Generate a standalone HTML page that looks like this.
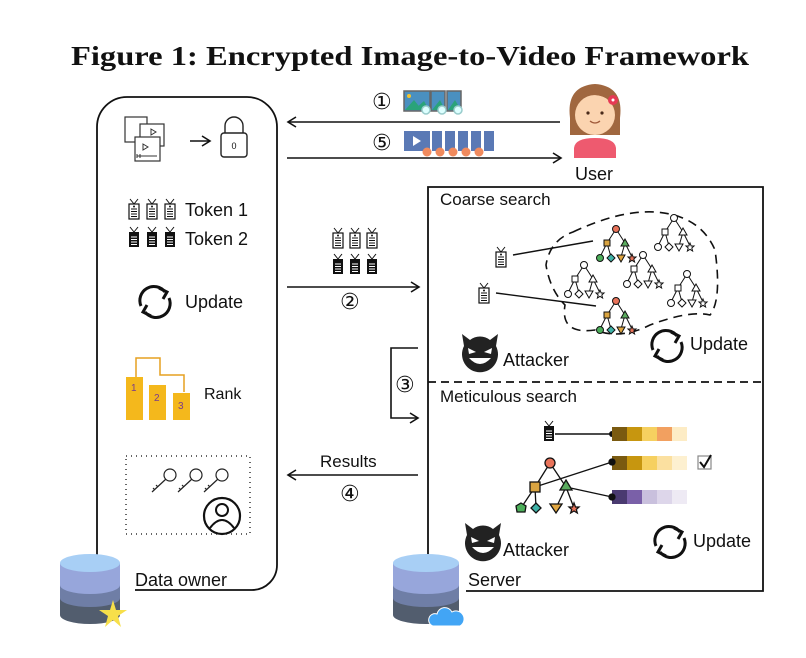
<!DOCTYPE html>
<html><head><meta charset="utf-8"><style>
html,body{margin:0;padding:0;background:#fff;}
svg{display:block;}
text{font-family:"Liberation Sans",sans-serif;fill:#111;}
</style></head><body>
<svg width="806" height="658" viewBox="0 0 806 658" xmlns="http://www.w3.org/2000/svg">
<defs>
<marker id="ah" markerWidth="12" markerHeight="12" refX="10" refY="6" orient="auto" markerUnits="userSpaceOnUse">
<path d="M2,1 L10,6 L2,11" fill="none" stroke="#111" stroke-width="1.6"/>
</marker>
<symbol id="tokW" viewBox="0 0 12 20" overflow="visible">
<path d="M2,0 L6,5 L10,0" stroke="#111" fill="none" stroke-width="1"/>
<rect x="1" y="5" width="10" height="15" fill="#fff" stroke="#111" stroke-width="1.2"/>
<circle cx="6" cy="7.5" r="1" fill="#111"/>
<path d="M3,10h6M3,12.5h6M3,15h6M3,17.5h6" stroke="#111" stroke-width="1"/>
</symbol>
<symbol id="tokB" viewBox="0 0 12 20" overflow="visible">
<path d="M2,0 L6,5 L10,0" stroke="#111" fill="none" stroke-width="1"/>
<rect x="1" y="5" width="10" height="15" fill="#111"/>
<path d="M3,10h6M3,12.5h6M3,15h6M3,17.5h6" stroke="#fff" stroke-width="1"/>
</symbol>
<symbol id="upd" viewBox="-20 -20 40 40" overflow="visible">
<path d="M-14,4 A14,14 0 0 1 10,-10" fill="none" stroke="#111" stroke-width="3"/>
<path d="M4,-14 L12,-10 L8,-3" fill="none" stroke="#111" stroke-width="3"/>
<path d="M14,-4 A14,14 0 0 1 -10,10" fill="none" stroke="#111" stroke-width="3"/>
<path d="M-4,14 L-12,10 L-8,3" fill="none" stroke="#111" stroke-width="3"/>
</symbol>
<symbol id="treeW" viewBox="-22 -4 44 40" overflow="visible">
<g stroke="#111" stroke-width="1" fill="#fff">
<path d="M0,0 L-9,14 M0,0 L9,14 M-9,14 L-16,28 M-9,14 L-5,28 M9,14 L5,28 M9,14 L16,28"/>
<circle cx="0" cy="0" r="3.5"/>
<rect x="-12" y="11" width="6" height="6"/>
<path d="M9,10 L13,17 L5,17Z"/>
<circle cx="-16" cy="29" r="3.5"/>
<path d="M-5,25 L-1,29 L-5,33 L-9,29Z"/>
<path d="M1,26 L9,26 L5,33Z"/>
<path d="M16,25 L17.2,28 L20,28 L17.8,30 L18.6,33 L16,31.3 L13.4,33 L14.2,30 L12,28 L14.8,28Z"/>
</g>
</symbol>
<symbol id="treeC" viewBox="-22 -4 44 40" overflow="visible">
<g stroke="#111" stroke-width="1">
<path d="M0,0 L-9,14 M0,0 L9,14 M-9,14 L-16,28 M-9,14 L-5,28 M9,14 L5,28 M9,14 L16,28" fill="none"/>
<circle cx="0" cy="0" r="3.5" fill="#e8735a"/>
<rect x="-12" y="11" width="6" height="6" fill="#d9a441"/>
<path d="M9,10 L13,17 L5,17Z" fill="#5aab5e"/>
<circle cx="-16" cy="29" r="3.5" fill="#4cae5a"/>
<path d="M-5,25 L-1,29 L-5,33 L-9,29Z" fill="#3fb3a8"/>
<path d="M1,26 L9,26 L5,33Z" fill="#e0a640"/>
<path d="M16,25 L17.2,28 L20,28 L17.8,30 L18.6,33 L16,31.3 L13.4,33 L14.2,30 L12,28 L14.8,28Z" fill="#e8735a"/>
</g>
</symbol>
<symbol id="devil" viewBox="-22 -22 44 44" overflow="visible">
<path d="M-18,-18 L-10,-12 A16,16 0 0 1 10,-12 L18,-18 L16,-6 A18,18 0 1 1 -16,-6 Z" fill="#222"/>
<path d="M-12,-4 L-4,0 L-11,2Z M12,-4 L4,0 L11,2Z" fill="#fff"/>
<path d="M-11,6 Q0,18 11,6 Z" fill="#fff"/>
</symbol>
</defs>

<!-- title -->
<text x="410" y="65" text-anchor="middle" style="font-family:'Liberation Serif',serif;font-weight:bold;font-size:27px" textLength="678" lengthAdjust="spacingAndGlyphs">Figure 1: Encrypted Image-to-Video Framework</text>

<!-- data owner box -->
<path d="M97,555 L97,127 A30,30 0 0 1 127,97 L247,97 A30,30 0 0 1 277,127 L277,565 A25,25 0 0 1 252,590 L135,590" fill="none" stroke="#111" stroke-width="1.8"/>

<!-- server box -->
<path d="M428,555 L428,187 L763,187 L763,591 L466,591" fill="none" stroke="#111" stroke-width="1.8"/>
<line x1="428" y1="382" x2="763" y2="382" stroke="#111" stroke-width="1.8" stroke-dasharray="8,5"/>

<!-- arrows top -->
<line x1="560" y1="122" x2="288" y2="122" stroke="#111" stroke-width="1.6" marker-end="url(#ah)"/>
<line x1="287" y1="158" x2="561" y2="158" stroke="#111" stroke-width="1.6" marker-end="url(#ah)"/>
<text x="372" y="109" font-size="22" style="font-family:'DejaVu Sans',sans-serif">①</text>
<text x="372" y="150" font-size="22" style="font-family:'DejaVu Sans',sans-serif">⑤</text>
<!-- images -->
<g>
<rect x="404" y="91" width="26" height="20" fill="#4a90c0" stroke="#666" stroke-width="1.5"/>
<path d="M405,110 L414,100 L422,110Z M414,110 L424,101 L429,110Z" fill="#2aa37a"/>
<circle cx="409" cy="96" r="2" fill="#f4c430"/>
<rect x="431" y="91" width="14" height="20" fill="#4a90c0" stroke="#666" stroke-width="1.5"/>
<rect x="447" y="91" width="14" height="20" fill="#4a90c0" stroke="#666" stroke-width="1.5"/>
<path d="M432,110 L440,100 L445,110Z M448,110 L455,100 L461,110Z" fill="#2aa37a"/>
<circle cx="426" cy="110" r="4" fill="#dff" stroke="#9cc" stroke-width="1.5"/>
<circle cx="442" cy="110" r="4" fill="#dff" stroke="#9cc" stroke-width="1.5"/>
<circle cx="458" cy="110" r="4" fill="#dff" stroke="#9cc" stroke-width="1.5"/>
</g>
<!-- video strip -->
<g>
<rect x="404" y="131" width="26" height="20" fill="#5a79b5"/>
<path d="M413,136 L421,141 L413,146Z" fill="#fff"/>
<rect x="432" y="131" width="10" height="20" fill="#5a79b5"/>
<rect x="445" y="131" width="10" height="20" fill="#5a79b5"/>
<rect x="458" y="131" width="10" height="20" fill="#5a79b5"/>
<rect x="471" y="131" width="10" height="20" fill="#5a79b5"/>
<rect x="484" y="131" width="10" height="20" fill="#5a79b5"/>
<g fill="#f08a5d">
<circle cx="427" cy="152" r="4.5"/><circle cx="440" cy="152" r="4.5"/><circle cx="453" cy="152" r="4.5"/><circle cx="466" cy="152" r="4.5"/><circle cx="479" cy="152" r="4.5"/>
</g>
</g>

<!-- user -->
<g>
<path d="M570,118 Q566,86 595,84 Q624,86 620,118 L620,135 L570,135Z" fill="#a0673f"/>
<ellipse cx="595" cy="115" rx="20" ry="20" fill="#fbd4b0"/>
<path d="M575,105 Q590,86 615,103 L615,96 Q600,82 577,95Z" fill="#a0673f"/>
<circle cx="588" cy="113" r="1.6" fill="#4a2a1a"/><circle cx="602" cy="113" r="1.6" fill="#4a2a1a"/>
<path d="M590,121 Q595,125 600,121" fill="none" stroke="#a05a3a" stroke-width="1.3"/>
<path d="M574,158 L574,148 Q575,138 595,138 Q615,138 616,148 L616,158Z" fill="#ee5a6f"/>
<circle cx="613" cy="100" r="5" fill="#e63a55"/><circle cx="613" cy="100" r="1.5" fill="#fff"/>
</g>
<text x="575" y="180" font-size="18">User</text>

<!-- left: film icons -->
<g fill="#fff" stroke="#333" stroke-width="1.2">
<rect x="125" y="117" width="22" height="25"/>
<rect x="140" y="124" width="24" height="22"/>
<rect x="135" y="137" width="25" height="24"/>
</g>
<path d="M143,144 L148,147 L143,150Z M151,129 L156,132 L151,135Z" fill="none" stroke="#333"/>
<path d="M137,156 h20 M137,154v4 M140,154v4" stroke="#333" stroke-width="1"/>
<line x1="190" y1="141" x2="210" y2="141" stroke="#111" stroke-width="1.4" marker-end="url(#ah)"/>
<path d="M225,133 L225,126 A9,9 0 0 1 243,126 L243,133" fill="none" stroke="#222" stroke-width="1.4"/>
<rect x="221" y="133" width="26" height="24" rx="3" fill="#fff" stroke="#222" stroke-width="1.4"/>
<text x="234" y="149" font-size="9" text-anchor="middle">0</text>

<!-- tokens -->
<use href="#tokW" x="128" y="199" width="12" height="20"/>
<use href="#tokW" x="146" y="199" width="12" height="20"/>
<use href="#tokW" x="164" y="199" width="12" height="20"/>
<use href="#tokB" x="128" y="227" width="12" height="20"/>
<use href="#tokB" x="146" y="227" width="12" height="20"/>
<use href="#tokB" x="164" y="227" width="12" height="20"/>
<text x="185" y="216" font-size="18">Token 1</text>
<text x="185" y="245" font-size="18">Token 2</text>

<use href="#upd" x="135" y="282" width="40" height="40"/>
<text x="185" y="308" font-size="18">Update</text>

<!-- rank -->
<path d="M136,377 L136,358 L160,358 L160,375 L184,375 L184,392" fill="none" stroke="#e5a020" stroke-width="1.5"/>
<rect x="126" y="377" width="17" height="43" fill="#f4b81c"/>
<rect x="149" y="385" width="17" height="35" fill="#f4b81c"/>
<rect x="173" y="393" width="17" height="27" fill="#f4b81c"/>
<text x="131" y="391" font-size="10" fill="#7a3b8a" style="fill:#7a3b8a">1</text>
<text x="154" y="401" font-size="10" style="fill:#7a3b8a">2</text>
<text x="178" y="409" font-size="10" style="fill:#7a3b8a">3</text>
<text x="204" y="399" font-size="16">Rank</text>

<!-- keys box -->
<rect x="126" y="456" width="124" height="78" fill="none" stroke="#333" stroke-width="1.5" stroke-dasharray="1,4"/>
<g fill="#fff" stroke="#222" stroke-width="1.2">
<circle cx="170" cy="475" r="6"/><circle cx="196" cy="475" r="6"/><circle cx="222" cy="475" r="6"/>
<path d="M166,479 L152,492 M158,487l-2,-2 M155,490l-2,-2 M192,479 L178,492 M184,487l-2,-2 M181,490l-2,-2 M218,479 L204,492 M210,487l-2,-2 M207,490l-2,-2" fill="none"/>
</g>
<circle cx="222" cy="516" r="18" fill="#fff" stroke="#111" stroke-width="2.2"/>
<circle cx="222" cy="510" r="6" fill="none" stroke="#111" stroke-width="2"/>
<path d="M210,528 Q222,512 234,528" fill="none" stroke="#111" stroke-width="2"/>

<!-- db left -->
<g>
<path d="M60,575 L60,615 A30,9 0 0 0 120,615 L120,575Z" fill="#525d6e"/>
<path d="M60,573 L60,598 A30,9 0 0 0 120,598 L120,573Z" fill="#6f7ea6"/>
<path d="M60,563 L60,585 A30,9 0 0 0 120,585 L120,563Z" fill="#97a6db"/>
<ellipse cx="90" cy="563" rx="30" ry="9" fill="#a8cff5"/>
<path d="M113,600 L116,610 L127,610 L118,616 L121,627 L113,620 L105,627 L108,616 L99,610 L110,610Z" fill="#f7df4a"/>
</g>
<text x="135" y="586" font-size="18">Data owner</text>

<!-- db server -->
<g>
<path d="M393,575 L393,615 A33,9 0 0 0 459,615 L459,575Z" fill="#525d6e"/>
<path d="M393,573 L393,598 A33,9 0 0 0 459,598 L459,573Z" fill="#6f7ea6"/>
<path d="M393,563 L393,585 A33,9 0 0 0 459,585 L459,563Z" fill="#97a6db"/>
<ellipse cx="426" cy="563" rx="33" ry="9" fill="#a8cff5"/>
<path d="M433,626 A6,6 0 0 1 437,614 A8,8 0 0 1 452,612 A6,6 0 0 1 460,626Z" fill="#42a5f5" stroke="#fff" stroke-width="1"/>
</g>
<text x="468" y="586" font-size="18">Server</text>

<!-- arrow 2 -->
<use href="#tokW" x="332" y="228" width="12" height="20"/>
<use href="#tokW" x="349" y="228" width="12" height="20"/>
<use href="#tokW" x="366" y="228" width="12" height="20"/>
<use href="#tokB" x="332" y="254" width="12" height="20"/>
<use href="#tokB" x="349" y="254" width="12" height="20"/>
<use href="#tokB" x="366" y="254" width="12" height="20"/>
<line x1="287" y1="287" x2="419" y2="287" stroke="#111" stroke-width="1.6" marker-end="url(#ah)"/>
<text x="340" y="309" font-size="22" style="font-family:'DejaVu Sans',sans-serif">②</text>

<!-- bracket 3 -->
<path d="M418,348 L391,348 L391,418 L418,418" fill="none" stroke="#111" stroke-width="1.6" marker-end="url(#ah)"/>
<text x="395" y="392" font-size="22" style="font-family:'DejaVu Sans',sans-serif">③</text>

<!-- results -->
<text x="320" y="467" font-size="17">Results</text>
<line x1="418" y1="475" x2="288" y2="475" stroke="#111" stroke-width="1.6" marker-end="url(#ah)"/>
<text x="340" y="501" font-size="22" style="font-family:'DejaVu Sans',sans-serif">④</text>

<!-- coarse search -->
<text x="440" y="205" font-size="17">Coarse search</text>
<path d="M573,232 Q620,210 655,212 Q700,215 715,250 Q722,300 710,315 Q690,310 650,325 Q620,340 595,330 Q560,335 565,305 Q550,290 546,265 Q550,240 573,232" fill="none" stroke="#111" stroke-width="1.6" stroke-dasharray="9,6"/>
<use href="#tokW" x="495" y="247" width="12" height="20"/>
<use href="#tokW" x="478" y="283" width="12" height="20"/>
<line x1="513" y1="255" x2="593" y2="241" stroke="#111" stroke-width="1.4"/>
<line x1="496" y1="293" x2="596" y2="306" stroke="#111" stroke-width="1.4"/>
<use href="#treeC" x="594" y="225" width="44" height="40"/>
<use href="#treeW" x="652" y="214" width="44" height="40"/>
<use href="#treeW" x="562" y="261" width="44" height="40"/>
<use href="#treeW" x="621" y="251" width="44" height="40"/>
<use href="#treeW" x="665" y="270" width="44" height="40"/>
<use href="#treeC" x="594" y="297" width="44" height="40"/>
<use href="#devil" x="458" y="330" width="44" height="44"/>
<text x="503" y="366" font-size="18">Attacker</text>
<use href="#upd" x="647" y="326" width="40" height="40"/>
<text x="690" y="350" font-size="18">Update</text>

<!-- meticulous -->
<text x="440" y="402" font-size="17">Meticulous search</text>
<use href="#tokB" x="543" y="421" width="12" height="20"/>
<line x1="555" y1="434" x2="612" y2="434" stroke="#111" stroke-width="1.4"/>
<circle cx="612" cy="434" r="3" fill="#111"/>
<g>
<rect x="612" y="427" width="15" height="14" fill="#7a5a10"/><rect x="627" y="427" width="15" height="14" fill="#c7960f"/><rect x="642" y="427" width="15" height="14" fill="#f6d060"/><rect x="657" y="427" width="15" height="14" fill="#f2a060"/><rect x="672" y="427" width="15" height="14" fill="#fdecc5"/>
<rect x="612" y="456" width="15" height="14" fill="#7a5a10"/><rect x="627" y="456" width="15" height="14" fill="#c7960f"/><rect x="642" y="456" width="15" height="14" fill="#f6d060"/><rect x="657" y="456" width="15" height="14" fill="#fbe0a0"/><rect x="672" y="456" width="15" height="14" fill="#fdf0d0"/>
<rect x="612" y="490" width="15" height="14" fill="#4a3a70"/><rect x="627" y="490" width="15" height="14" fill="#7a60a8"/><rect x="642" y="490" width="15" height="14" fill="#c9c0dd"/><rect x="657" y="490" width="15" height="14" fill="#ddd6ea"/><rect x="672" y="490" width="15" height="14" fill="#eeeaf4"/>
</g>
<rect x="698" y="456" width="13" height="13" fill="#fff" stroke="#888" stroke-width="1.2"/>
<path d="M700,462 L704,467 L711,455" fill="none" stroke="#111" stroke-width="2"/>
<g stroke="#111" stroke-width="1.3">
<path d="M550,463 L535,487 M550,463 L566,487 M535,487 L521,508 M535,487 L536,508 M566,487 L556,508 M566,487 L574,508" fill="none"/>
<line x1="535" y1="487" x2="612" y2="462"/>
<line x1="566" y1="487" x2="612" y2="497"/>
<circle cx="612" cy="462" r="3" fill="#111"/>
<circle cx="612" cy="497" r="3" fill="#111"/>
<circle cx="550" cy="463" r="5" fill="#e8735a"/>
<rect x="530" y="482" width="10" height="10" fill="#d9a441"/>
<path d="M566,480 L572,490 L560,490Z" fill="#5aab5e"/>
<path d="M521,503 L526,506 L525,512 L517,512 L516,506Z" fill="#4cae5a"/>
<path d="M536,503 L541,508 L536,513 L531,508Z" fill="#3fb3a8"/>
<path d="M550,504 L562,504 L556,513Z" fill="#e0a640"/>
<path d="M574,503 L575.5,507 L579,507 L576.3,509.5 L577.3,513 L574,511 L570.7,513 L571.7,509.5 L569,507 L572.5,507Z" fill="#e8735a"/>
</g>
<use href="#devil" x="461" y="519" width="44" height="44"/>
<text x="503" y="556" font-size="18">Attacker</text>
<use href="#upd" x="650" y="522" width="40" height="40"/>
<text x="693" y="547" font-size="18">Update</text>
</svg>
</body></html>
